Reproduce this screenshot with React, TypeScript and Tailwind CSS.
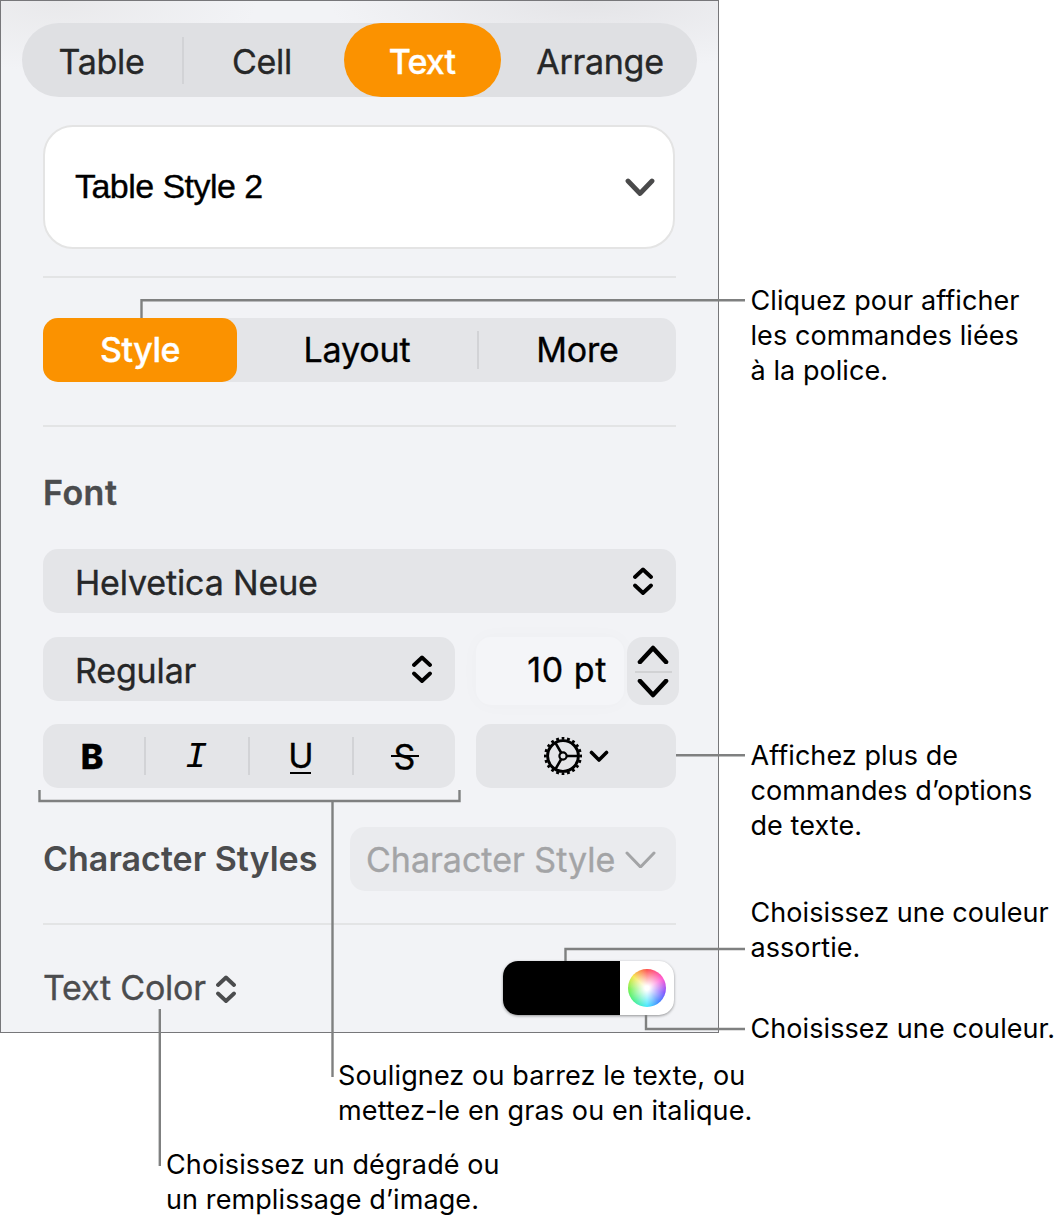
import type { ReactNode } from "react";

interface ChevronProps {
    d: string;
    width: number;
    height: number;
    stroke?: number;
    className?: string;
}

const Chevron = ({ d, width, height, stroke = 4, className = "" }: ChevronProps) => (
    <svg
        width={width}
        height={height}
        viewBox={`0 0 ${width} ${height}`}
        fill="none"
        stroke="currentColor"
        strokeWidth={stroke}
        strokeLinecap="round"
        strokeLinejoin="round"
        className={`shrink-0 ${className}`}
    >
        <path d={d} />
    </svg>
);

const UpDown = ({ className = "" }: { className?: string }) => (
    <Chevron d="M2 11L10 3.500L18 11M2 19.5L10 27L18 19.5" width={20} height={31} stroke={3.8} className={className} />
);

const GearIcon = () => (
    <svg width="40" height="40" viewBox="-20 -20 40 40" fill="none" stroke="black" className="shrink-0">
        <circle r="15.4" strokeWidth="2.9" />
        <circle r="17.6" strokeWidth="2.8" pathLength={40} strokeDasharray="1 1" strokeDashoffset="0.5" />
        <circle r="3.6" strokeWidth="2.2" />
        <path d="M4 0H16M-2 -3.5L-8 -13.9M-2 3.5L-8 13.9" strokeWidth="2.6" />
    </svg>
);

const Divider = ({ className = "" }: { className?: string }) => (
    <div className={`ml-[42px] h-[2px] w-[633px] bg-[#e3e4e5] ${className}`} />
);

const Separator = ({ className = "" }: { className?: string }) => (
    <div className={`h-[38px] w-[2px] shrink-0 bg-[#d2d3d6] ${className}`} />
);

const Callout = ({ lines, className = "" }: { lines: string[]; className?: string }) => (
    <p className={`whitespace-nowrap text-[27px] leading-[35px] text-black ${className}`}>
        {lines.map((line) => (
            <span key={line} className="block">{line}</span>
        ))}
    </p>
);

const Tab = ({ children, className = "" }: { children: ReactNode; className?: string }) => (
    <button className={`flex h-full shrink-0 items-center justify-center ${className}`}>{children}</button>
);

const LeaderLines = () => (
    <svg
        width="1059"
        height="1216"
        fill="none"
        stroke="#7f8080"
        strokeWidth="2.4"
        className="pointer-events-none absolute left-0 top-0"
    >
        <path d="M141.5 318V300.3H745" />
        <path d="M676 755.3H745" />
        <path d="M39.5 790V801H459.5V790" />
        <path d="M332.5 801V1077" />
        <path d="M565.5 961V949H745" />
        <path d="M646 1015V1029H745" />
        <path d="M159.8 1009V1166" />
    </svg>
);

const InspectorPanel = () => (
    <section className="h-[1033px] w-[719px] shrink-0 border border-[#77777a] bg-[#f2f3f6] bg-[radial-gradient(ellipse_200px_70px_at_8%_0%,#e9e9eb,transparent),radial-gradient(ellipse_260px_70px_at_82%_0%,#e4e4e7,transparent)] [-webkit-text-stroke:0.35px_currentColor]">
        <nav className="ml-[20.500px] mt-[22px] flex h-[74px] w-[675px] items-center rounded-full bg-[#dfe0e3] text-[34px] tracking-[-0.3px] text-[#262728]">
            <Tab className="w-[160px] pt-[2px]">Table</Tab>
            <Separator className="h-[47px]" />
            <Tab className="w-[160px] pr-[3px] pt-[2px]">Cell</Tab>
            <Tab className="w-[157px] rounded-full bg-[#fb9200] pt-[2px] font-medium tracking-[-0.9px] text-white">Text</Tab>
            <Tab className="w-[195px] pl-[4px] pt-[2px]">Arrange</Tab>
        </nav>

        <div className="ml-[42px] mt-[28px] flex h-[124px] w-[632px] items-center justify-between rounded-[30px] border-2 border-[#e4e4e4] bg-white pl-[30px] pr-[18px]">
            <span className="pb-px font-['Liberation_Sans',sans-serif] text-[34px] tracking-[-0.55px] text-black">
                Table Style 2
            </span>
            <Chevron d="M3 3L15 15.5L27 3" width={30} height={19} stroke={4.8} className="text-[#4a4a4b]" />
        </div>

        <Divider className="mt-[27px]" />

        <div className="ml-[42px] mt-[40px] flex h-[64px] w-[633px] items-center rounded-[15px] bg-[#e4e5e8] text-[34px] tracking-[-0.15px] text-black">
            <Tab className="w-[194px] rounded-[15px] bg-[#fb9200] pb-[2px] font-medium tracking-[-0.5px] text-white">Style</Tab>
            <Tab className="w-[240px] pb-px">Layout</Tab>
            <Separator />
            <Tab className="w-[197px] pb-px">More</Tab>
        </div>

        <Divider className="mt-[43px]" />

        <h2 className="ml-[42px] mt-[46px] text-[34px] font-semibold leading-[40px] tracking-[0.5px] text-[#4b4c4e]">Font</h2>

        <div className="ml-[42px] mt-[36px] flex h-[64px] w-[633px] items-center justify-between rounded-[15px] bg-[#e4e5e8] pl-[32px] pr-[23px] text-[34px] tracking-[-0.15px] text-[#262728]">
            <span className="pt-[2px]">Helvetica Neue</span>
            <UpDown className="text-black" />
        </div>

        <div className="ml-[42px] mt-[24px] flex items-start">
            <div className="flex h-[64px] w-[412px] items-center justify-between rounded-[15px] bg-[#e4e5e8] pl-[32px] pr-[23px] text-[34px] tracking-[-0.15px] text-[#262728]">
                <span className="pt-[2px]">Regular</span>
                <UpDown className="text-black" />
            </div>
            <div className="ml-[21px] flex h-[68px] w-[148px] items-center justify-end rounded-[15px] bg-[#f4f5f8] pb-[3px] pr-[17px] text-[34px] tracking-[0.6px] text-black shadow-[0_0_20px_rgba(0,0,0,0.025)]">
                10 pt
            </div>
            <div className="ml-[3px] flex h-[68px] w-[52px] flex-col items-center justify-between rounded-[16px] bg-[#e4e5e8] pb-[7px] pt-[8px] text-black">
                <Chevron d="M3 17L16 3L29 17" width={32} height={19} stroke={4.6} />
                <div className="h-[2px] w-[37px] bg-[#d1d2d4]" />
                <Chevron d="M3 2L16 16L29 2" width={32} height={19} stroke={4.6} />
            </div>
        </div>

        <div className="ml-[42px] mt-[19px] flex h-[64px] items-center">
            <div className="flex h-full w-[412px] items-center rounded-[15px] bg-[#e4e5e8] text-[34px] text-black">
                <Tab className="w-[101px] pr-[3px] font-extrabold">B</Tab>
                <Separator />
                <Tab className="w-[102px] pr-[2px] pt-[4px] font-['Liberation_Mono',monospace] text-[37px] italic [-webkit-text-stroke:0]">I</Tab>
                <Separator />
                <Tab className="w-[102px]">
                    <span className="relative pb-px">
                        U
                        <span className="absolute bottom-[8px] left-[2px] h-[2.5px] w-[21px] bg-black" />
                    </span>
                </Tab>
                <Separator />
                <Tab className="w-[101px]">
                    <span className="relative">
                        S
                        <span className="absolute -left-[3px] top-[24px] h-[2px] w-[28px] bg-black" />
                    </span>
                </Tab>
            </div>
            <div className="ml-[21px] flex h-full w-[200px] items-center rounded-[15px] bg-[#e4e5e8] pl-[67px] text-black">
                <GearIcon />
                <Chevron d="M2.500 2.500L10 10L17.500 2.500" width={20} height={12} stroke={3.6} className="ml-[6px]" />
            </div>
        </div>

        <div className="ml-[42px] mt-[39px] flex h-[64px] w-[633px] items-center justify-between">
            <h2 className="pb-[2px] text-[34px] font-semibold text-[#4b4c4e] [-webkit-text-stroke:0]">Character Styles</h2>
            <div className="flex h-full w-[326px] items-center justify-between rounded-[15px] bg-[#eaebee] pl-[16px] pr-[20px] text-[34px] text-[#a3a4a6]">
                <span>Character Style</span>
                <Chevron d="M2 3L15.500 17L29 3" width={31} height={18} stroke={3} />
            </div>
        </div>

        <Divider className="mt-[32px]" />

        <div className="ml-[42px] mt-[36px] flex h-[54px] items-center">
            <span className="pb-[2px] text-[34px] tracking-[-0.2px] text-[#4b4c4e]">Text Color</span>
            <UpDown className="ml-[10px] mt-[2px] text-[#4b4c4e]" />
            <div className="ml-auto mr-[44px] flex h-[54px] w-[171px] overflow-hidden rounded-[15px] bg-white shadow-[0_1px_3px_rgba(0,0,0,0.4)]">
                <div className="w-[117px] bg-black" />
                <div className="flex flex-1 items-center justify-center">
                    <div className="size-[38px] rounded-full bg-[radial-gradient(circle,white_8%,transparent_72%),conic-gradient(#ff4a45,#ff4fd0_60deg,#7a4dff_105deg,#3b82ff_140deg,#3de8ff_180deg,#42f08a_225deg,#6ef04a_265deg,#f5e642_310deg,#ff4a45)]" />
                </div>
            </div>
        </div>
    </section>
);

const App = () => (
    <main className="relative h-[1216px] w-[1059px] overflow-hidden bg-white font-['Inter',sans-serif]">
        <div className="flex">
            <InspectorPanel />
            <aside className="pl-[31.500px] tracking-[0.07px]">
                <Callout className="mt-[283px]" lines={["Cliquez pour afficher", "les commandes liées", "à la police."]} />
                <Callout className="mt-[350px]" lines={["Affichez plus de", "commandes d’options", "de texte."]} />
                <Callout className="mt-[52px]" lines={["Choisissez une couleur", "assortie."]} />
                <Callout className="mt-[46px]" lines={["Choisissez une couleur."]} />
            </aside>
        </div>
        <Callout
            className="ml-[338px] mt-[12px] tracking-[0.12px]"
            lines={["Soulignez ou barrez le texte, ou", "mettez-le en gras ou en italique."]}
        />
        <Callout className="ml-[166px] mt-[19px] tracking-[0.1px]" lines={["Choisissez un dégradé ou", "un remplissage d’image."]} />
        <LeaderLines />
    </main>
);

export default App;
